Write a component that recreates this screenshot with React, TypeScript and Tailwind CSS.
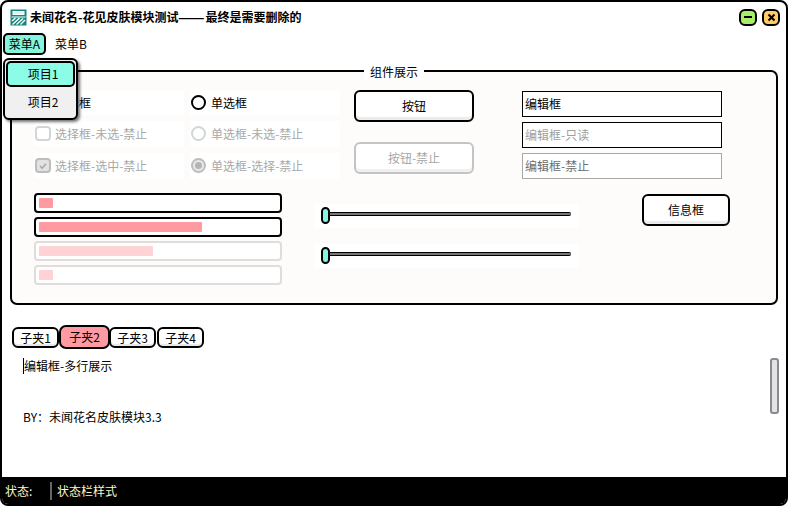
import React from 'react';

const Logo = () => (
  <svg width="17" height="17" viewBox="0 0 17 17" className="shrink-0">
    <rect x="0.5" y="0.5" width="16" height="16" fill="#12897c" />
    <rect x="3" y="2.5" width="11" height="3" fill="#d9f3ef" stroke="#fff" strokeWidth="1" />
    <path d="M1.5 8H15.5" stroke="#fff" strokeWidth="1.2" />
    <path d="M2 12L5.5 9M2.5 15.5L9.5 9M6.5 15.5L13 9.5M10.5 15.5L15 11" stroke="#fff" strokeWidth="1.4" fill="none" />
  </svg>
);

const CheckRow = ({ label, checked, disabled }: { label: string; checked?: boolean; disabled?: boolean }) => (
  <div className="h-[25px] flex items-center gap-[4px] pl-px bg-white">
    <span className={`w-[16px] h-[15px] rounded-[4px] border-2 flex items-center justify-center ${checked ? 'bg-[#e2e2e2] border-[#bdbdbd]' : 'bg-white border-[#d2d6d6]'}`}>
      {checked && (
        <svg width="10" height="10" viewBox="0 0 10 10">
          <path d="M2 5L4.2 7.2L8 2.8" fill="none" stroke="#a8a8a8" strokeWidth="1.6" />
        </svg>
      )}
    </span>
    <span className={disabled ? 'text-[#a8a8a8]' : 'text-black'}>{label}</span>
  </div>
);

const RadioRow = ({ label, checked, disabled }: { label: string; checked?: boolean; disabled?: boolean }) => (
  <div className="h-[25px] flex items-center gap-[5px] pl-px bg-white">
    <span className={`w-[15px] h-[15px] rounded-full border-2 flex items-center justify-center ${disabled ? (checked ? 'border-[#bdbdbd] bg-[#e8e8e8]' : 'border-[#d2d6d6]') : 'border-black'}`}>
      {checked && <span className="w-[7px] h-[7px] rounded-full bg-[#b4b4b4]" />}
    </span>
    <span className={disabled ? 'text-[#a8a8a8]' : 'text-black'}>{label}</span>
  </div>
);

const Bar = ({ pct, disabled }: { pct: number; disabled?: boolean }) => (
  <div className={`h-[20px] rounded-[4px] border-2 bg-white p-[3px] ${disabled ? 'border-[#e0dcdc]' : 'border-black'}`}>
    <div className={`h-full rounded-[1px] ${disabled ? 'bg-[#ffd2d6]' : 'bg-[#ff9aa2]'}`} style={{ width: pct }} />
  </div>
);

const Slider = () => (
  <div className="h-[24px] flex items-start pl-[7px] bg-white">
    <span className="mt-[3px] w-[9px] h-[17px] rounded-full border-2 border-black bg-[#84f5de]" />
    <span className="mt-[8px] w-[241px] h-[4px] rounded-r-full bg-[#777] border-y border-black" />
  </div>
);

const Tab = ({ label, active, className }: { label: string; active?: boolean; className?: string }) => (
  <div className={`flex items-center justify-center border-2 border-black ${active ? 'w-[51px] h-[24px] mb-px rounded-[7px] bg-[#ff9aa2]' : 'w-[47px] h-[21px] mb-[2px] rounded-[6px] bg-white shadow-[inset_0_-2px_0_#e8e8e8]'} ${className ?? ''}`}>
    {label}
  </div>
);

export default function App() {
  return (
    <div className="w-[788px] h-[506px] relative flex flex-col border-2 border-black rounded-[8px] overflow-hidden bg-white text-[12px] leading-[16px] text-black font-['Noto_Sans_CJK_SC','Liberation_Sans',sans-serif]">
      <div className="h-[30px] shrink-0 flex items-center pl-[8px] pr-[6px] gap-[3px]">
        <Logo />
        <span className="font-bold flex-1 whitespace-nowrap">未闻花名-花见皮肤模块测试<span className="inline-block w-[27px] origin-left scale-x-[1.3]">——</span>最终是需要删除的</span>
        <div className="flex gap-[5px]">
          <span className="w-[18px] h-[17px] rounded-[6px] border-2 border-black bg-[#a6ee6a] flex items-center justify-center">
            <span className="w-[8px] h-[2px] bg-black" />
          </span>
          <span className="w-[18px] h-[17px] rounded-[6px] border-2 border-black bg-[#ffcc66] flex items-center justify-center">
            <svg width="9" height="9" viewBox="0 0 9 9">
              <path d="M1.5 1.5L7.5 7.5M7.5 1.5L1.5 7.5" stroke="#000" strokeWidth="2" />
            </svg>
          </span>
        </div>
      </div>

      <div className="h-[22px] mt-px ml-px shrink-0 flex items-center">
        <div className="w-[43px] h-[22px] rounded-[5px] border-2 border-black bg-[#84f5de] flex items-center justify-center">菜单A</div>
        <div className="ml-[9px]">菜单B</div>
      </div>

      <div className="relative ml-[8px] mt-[15px] w-[768px] h-[235px] shrink-0 rounded-[7px] border-2 border-black bg-[#fefcfb] pl-[22px] pt-[18px]">
        <div className="absolute -top-[8px] left-[352px] h-[16px] px-[6px] bg-white">组件展示</div>

        <div className="flex">
          <div className="w-[150px] flex flex-col gap-[6px]">
            <CheckRow label="选择框" />
            <CheckRow label="选择框-未选-禁止" disabled />
            <div className="mt-px"><CheckRow label="选择框-选中-禁止" checked disabled /></div>
          </div>
          <div className="w-[150px] ml-[6px] flex flex-col gap-[6px]">
            <RadioRow label="单选框" />
            <RadioRow label="单选框-未选-禁止" disabled />
            <div className="mt-px"><RadioRow label="单选框-选择-禁止" checked disabled /></div>
          </div>
          <div className="w-[120px] ml-[14px] flex flex-col gap-[20px]">
            <button className="h-[32px] rounded-[6px] border-2 border-black bg-white shadow-[inset_0_-3px_0_#ececec]">按钮</button>
            <button className="h-[32px] rounded-[6px] border-2 border-[#c4c4c4] bg-white text-[#a8a8a8] shadow-[inset_0_-3px_0_#f0f0f0]">按钮-禁止</button>
          </div>
          <div className="w-[200px] ml-[48px] mt-px flex flex-col gap-[5px]">
            <div className="h-[26px] border border-black bg-white flex items-center pl-[2px]">编辑框</div>
            <div className="h-[26px] border border-black bg-white flex items-center pl-[2px] text-[#a0a0a0]">编辑框-只读</div>
            <div className="h-[26px] border border-[#a8a8a8] bg-white flex items-center pl-[2px] text-[#6d6d6d]">编辑框-禁止</div>
          </div>
        </div>

        <div className="flex mt-[14px]">
          <div className="w-[248px] flex flex-col gap-[4px]">
            <Bar pct={14} />
            <Bar pct={163} />
            <Bar pct={114} disabled />
            <Bar pct={14} disabled />
          </div>
          <div className="w-[264px] ml-[32px] mt-[11px] flex flex-col gap-[16px]">
            <Slider />
            <Slider />
          </div>
          <button className="w-[88px] h-[32px] ml-[64px] mt-px rounded-[6px] border-2 border-black bg-white shadow-[inset_0_-3px_0_#ececec]">信息框</button>
        </div>
      </div>

      <div className="flex items-end h-[25px] ml-[10px] mt-[20px] shrink-0">
        <Tab label="子夹1" />
        <Tab label="子夹2" active />
        <Tab label="子夹3" className="-ml-px" />
        <Tab label="子夹4" className="ml-px" />
      </div>

      <div className="flex-1 flex justify-between pl-[21px] pr-[7px] pt-[8px]">
        <div className="flex flex-col">
          <div className="flex items-center">
            <span className="w-px h-[16px] bg-black" />
            <span>编辑框-多行展示</span>
          </div>
          <div className="mt-[35px]">BY：未闻花名皮肤模块3.3</div>
        </div>
        <div className="w-[9px] h-[56px] rounded-[3px] border-2 border-[#8a8a8e] bg-[#e4e4e6]" />
      </div>

      <div className="h-[27px] shrink-0 bg-black text-[#fff8c8] flex items-center pl-[3px]">
        <span className="w-[45px]">状态:</span>
        <span className="w-[2px] h-[18px] bg-[#666]" />
        <span className="ml-[5px]">状态栏样式</span>
      </div>

      <div className="absolute left-px top-[56px] w-[75px] h-[62px] rounded-[6px] border-2 border-black bg-[#f0f0f0] shadow-[2px_2px_3px_rgba(0,0,0,0.55)] p-px">
        <div className="h-[26px] rounded-[5px] border-2 border-black bg-[#8cfce6] flex items-center justify-center pl-[5px]">项目1</div>
        <div className="h-[28px] mt-px flex items-center justify-center pl-[5px]">项目2</div>
      </div>
    </div>
  );
}
